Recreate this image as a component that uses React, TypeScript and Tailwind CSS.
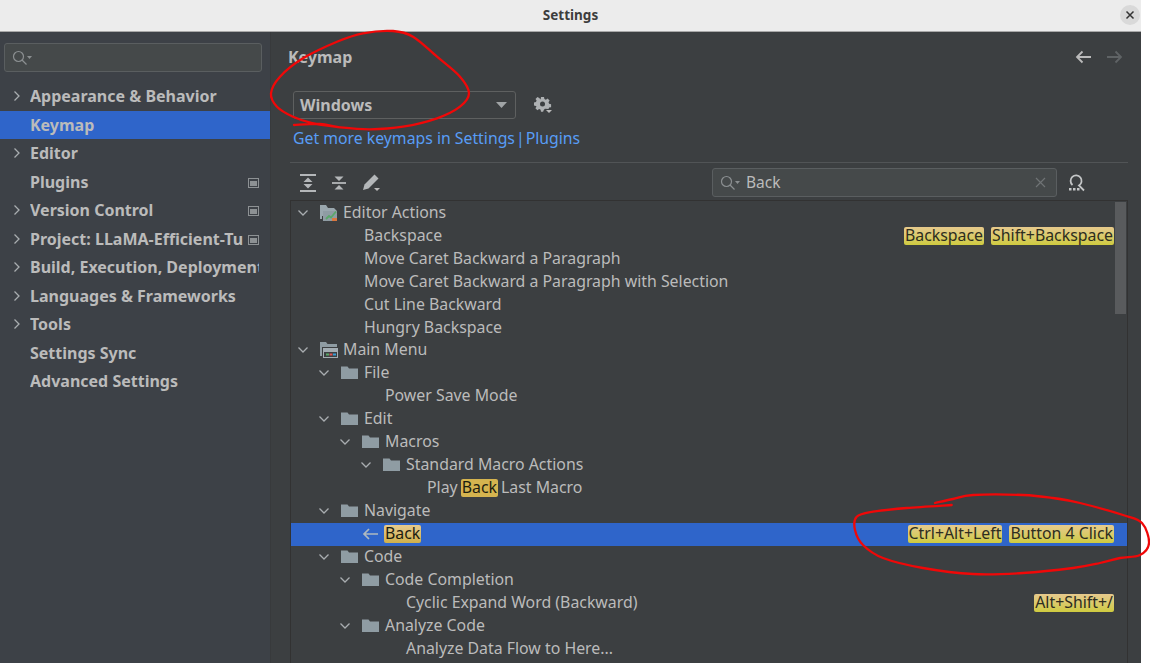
import React from 'react';

const font = { fontFamily: '"Noto Sans", sans-serif' };

const sidebarItems = [
  { label: 'Appearance & Behavior', arrow: true },
  { label: 'Keymap', selected: true },
  { label: 'Editor', arrow: true },
  { label: 'Plugins', badge: true },
  { label: 'Version Control', arrow: true, badge: true },
  { label: 'Project: LLaMA-Efficient-Tuner', arrow: true, badge: true },
  { label: 'Build, Execution, Deployment', arrow: true },
  { label: 'Languages & Frameworks', arrow: true },
  { label: 'Tools', arrow: true },
  { label: 'Settings Sync' },
  { label: 'Advanced Settings' },
];

type TreeRow = {
  depth: number;
  label: string;
  icon?: 'folder' | 'editor' | 'menu' | 'back';
  open?: boolean;
  shortcuts?: string[];
  selected?: boolean;
  match?: boolean;
};

const rows: TreeRow[] = [
  { depth: 0, label: 'Editor Actions', icon: 'editor', open: true },
  { depth: 1, label: 'Backspace', shortcuts: ['Backspace', 'Shift+Backspace'] },
  { depth: 1, label: 'Move Caret Backward a Paragraph' },
  { depth: 1, label: 'Move Caret Backward a Paragraph with Selection' },
  { depth: 1, label: 'Cut Line Backward' },
  { depth: 1, label: 'Hungry Backspace' },
  { depth: 0, label: 'Main Menu', icon: 'menu', open: true },
  { depth: 1, label: 'File', icon: 'folder', open: true },
  { depth: 2, label: 'Power Save Mode' },
  { depth: 1, label: 'Edit', icon: 'folder', open: true },
  { depth: 2, label: 'Macros', icon: 'folder', open: true },
  { depth: 3, label: 'Standard Macro Actions', icon: 'folder', open: true },
  { depth: 4, label: 'Play Back Last Macro', match: true },
  { depth: 1, label: 'Navigate', icon: 'folder', open: true },
  { depth: 2, label: 'Back', icon: 'back', selected: true, shortcuts: ['Ctrl+Alt+Left', 'Button 4 Click'] },
  { depth: 1, label: 'Code', icon: 'folder', open: true },
  { depth: 2, label: 'Code Completion', icon: 'folder', open: true },
  { depth: 3, label: 'Cyclic Expand Word (Backward)', shortcuts: ['Alt+Shift+/'] },
  { depth: 2, label: 'Analyze Code', icon: 'folder', open: true },
  { depth: 3, label: 'Analyze Data Flow to Here...' },
];

function Chevron({ dir }: { dir: 'right' | 'down' }) {
  return (
    <svg width="16" height="16" viewBox="0 0 16 16" fill="none" stroke="#a9adb0" strokeWidth="1.3">
      <path d={dir === 'right' ? 'M5.5 3.5 10 8l-4.500 4.500' : 'M3.500 5.500 8 10l4.500-4.500'} />
    </svg>
  );
}

function RowIcon({ icon }: { icon?: TreeRow['icon'] }) {
  if (icon === 'folder') {
    return (
      <svg width="17" height="16" viewBox="0 0 17 16">
        <path d="M0 1.500h6.500l1.500 2h9V14H0z" fill="#8f9ca3" />
      </svg>
    );
  }
  if (icon === 'back') {
    return (
      <svg width="16" height="16" viewBox="0 0 16 16" fill="none" stroke="#aeb9c0" strokeWidth="1.700">
        <path d="M16 8H2M7 3 2 8l5 5" />
      </svg>
    );
  }
  if (icon === 'menu') {
    return (
      <svg width="18" height="16" viewBox="0 0 18 16">
        <path d="M0 0h6l1.500 2H17v3H2v9H0z" fill="#8f9ca3" />
        <path d="M3 6h15v10H3z" fill="#a3adb3" />
        <path d="M4 10h13v5H4z" fill="#3c3f41" />
        <path d="M6 11.500h3v2H6z" fill="#59a869" />
        <path d="M9.500 11.500h3v2h-3z" fill="#e05555" />
        <path d="M13 11.500h3v2h-3z" fill="#389fd6" />
      </svg>
    );
  }
  if (icon === 'editor') {
    return (
      <svg width="18" height="16" viewBox="0 0 18 16">
        <path d="M0 0h6l2 3h6l3 3-6 5H2v3H0z" fill="#9aa7ae" />
        <path d="M3 6h14v10H3z" fill="#8f9ca3" />
        <path d="m6 14 3-3 2 1.500 5-6" fill="none" stroke="#59a869" strokeWidth="1.800" />
        <path d="M12 13h5v3h-5z" fill="#d9773f" />
      </svg>
    );
  }
  return null;
}

function Shortcut({ text }: { text: string }) {
  return (
    <span className="flex h-[18px] items-center rounded-[2px] bg-linear-to-b from-[#e6c98c] to-[#cfcb3e] px-[1px] text-[#2d2d20]">
      {text}
    </span>
  );
}

// catmull-rom through the traced pen points
function smooth(pts: number[][]) {
  let d = `M${pts[0][0]} ${pts[0][1]}`;
  for (let i = 0; i < pts.length - 1; i++) {
    const p0 = pts[Math.max(i - 1, 0)];
    const p1 = pts[i];
    const p2 = pts[i + 1];
    const p3 = pts[Math.min(i + 2, pts.length - 1)];
    const c1x = p1[0] + (p2[0] - p0[0]) / 6;
    const c1y = p1[1] + (p2[1] - p0[1]) / 6;
    const c2x = p2[0] - (p3[0] - p1[0]) / 6;
    const c2y = p2[1] - (p3[1] - p1[1]) / 6;
    d += ` C${c1x} ${c1y} ${c2x} ${c2y} ${p2[0]} ${p2[1]}`;
  }
  return d;
}

const circleTop = [
  [294, 125], [320, 124], [340, 127.300], [370, 129.300], [403, 126.700], [437, 118.300], [460, 106.700], [469, 93.300],
  [460, 76.700], [437, 56.700], [413, 36.700], [393, 31], [363, 33.300], [337, 41.700], [303, 58.300], [280, 76.700],
  [271, 93.300], [277, 106.700], [293, 116.700], [313, 123.300], [340, 127.300],
];

const circleBottom = [
  [951.700, 505], [906.700, 508], [873, 511.700], [856.700, 516.700], [855, 530], [863, 545], [883, 558], [923, 568],
  [973, 574], [1023, 573], [1073, 568], [1100, 563], [1120, 558], [1140, 555], [1149, 543], [1142, 523], [1123, 515],
  [1080, 503], [1053, 498], [1023, 495], [973, 495], [953, 499], [935, 503],
];

export default function App() {
  return (
    <div className="relative h-[663px] w-[1150px] overflow-hidden bg-white" style={font}>
      <div className="flex h-full w-[1141px] flex-col">
        {/* title bar */}
        <div className="relative flex h-[32px] shrink-0 items-center justify-center border-b border-[#a8a8a8] bg-[#ececec]">
          <span className="text-[13.500px] font-bold text-[#3d3d3d]">Settings</span>
          <div className="absolute right-[1px] top-[5px] flex h-[20px] w-[20px] items-center justify-center rounded-full bg-[#d9d9d9]">
            <svg width="10" height="10" viewBox="0 0 10 10" stroke="#333" strokeWidth="1.500">
              <path d="m1.500 1.500 7 7m0-7-7 7" />
            </svg>
          </div>
        </div>

        <div className="flex min-h-0 flex-1">
          {/* sidebar */}
          <aside className="flex w-[271px] shrink-0 flex-col border-r border-[#383a3c] bg-[#3d4147]">
            <div className="mx-[4px] mt-[11px] flex h-[29px] w-[258px] items-center rounded-[3px] border border-[#5a5e60] bg-[#45494a] pl-[7px]">
              <SearchGlass />
            </div>
            <nav className="mt-[10.200px] flex flex-col">
              {sidebarItems.map((item) => (
                <div
                  key={item.label}
                  className={`relative flex h-[28.500px] items-center text-[16px] font-bold text-[#bbbbbb] ${item.selected ? 'bg-[#2f65ca]' : ''}`}
                >
                  <span className="flex w-[30px] shrink-0 justify-center pl-[3px]">
                    {item.arrow && <Chevron dir="right" />}
                  </span>
                  <span className={`overflow-hidden whitespace-nowrap ${item.badge && item.arrow ? 'w-[213px]' : 'w-[229px]'}`}>
                    {item.label}
                  </span>
                  {item.badge && (
                    <span className="absolute right-[11px] top-[10px] h-[10px] w-[11px] border border-[#8d9194] bg-[#3d4147]">
                      <span className="mx-[1px] mt-[2px] block h-[5px] bg-[#8d9194]" />
                    </span>
                  )}
                </div>
              ))}
            </nav>
          </aside>

          {/* main panel */}
          <main className="flex min-w-0 flex-1 flex-col bg-[#3c3f41] text-[#bbbbbb]">
            <div className="flex h-[50px] shrink-0 items-center justify-between pl-[17px] pr-[18px]">
              <span className="text-[16px] font-bold">Keymap</span>
              <div className="flex items-center gap-[16px]">
                <svg width="16" height="14" viewBox="0 0 16 14" fill="none" stroke="#bbbbbb" strokeWidth="1.800">
                  <path d="M16 7H2M7.500 1.500 2 7l5.500 5.500" />
                </svg>
                <svg width="16" height="14" viewBox="0 0 16 14" fill="none" stroke="#5f6365" strokeWidth="1.800">
                  <path d="M0 7h14M8.500 1.500 14 7l-5.500 5.500" />
                </svg>
              </div>
            </div>

            <div className="mt-[9px] flex items-center pl-[22px]">
              <div className="flex h-[28px] w-[223px] items-center justify-between rounded-[3px] border border-[#5e6060] bg-[#3c3f41] pl-[6px] pr-[8px] text-[16px] font-bold">
                <span>Windows</span>
                <svg width="11" height="6" viewBox="0 0 11 6"><path d="M0 0h11L5.500 6z" fill="#a0a4a6" /></svg>
              </div>
              <svg className="ml-[18px]" width="18" height="18" viewBox="0 0 18 18">
                <path
                  d="M7 1h3l.4 2 1.500.7 1.700-1.100 2 2-1.100 1.700.6 1.500 2 .4v3l-2 .4-.6 1.300-3.600-.1-1.100 1.200-.7 1.700H7l-.4-2-1.500-.6-1.700 1.100-2-2 1.100-1.700L1.900 9.900 0 9.500v-3l2-.4.600-1.500L1.500 2.900l2-2 1.700 1.100L6.600 3.400z"
                  fill="#aeb1b3"
                />
                <circle cx="8.500" cy="8" r="2.500" fill="#3c3f41" />
                <path d="M12 14h6l-3 3z" fill="#bbbbbb" />
              </svg>
            </div>

            <div className="mt-[7px] flex pl-[22px] text-[15.800px] leading-[24px] text-[#589df6]">
              <span>Get more keymaps in Settings</span>
              <span className="mx-[1px]">|</span>
              <span>Plugins</span>
            </div>

            <div className="ml-[19px] mr-[13px] mt-[12px] border-t border-[#515456]" />

            {/* toolbar */}
            <div className="flex h-[37px] shrink-0 items-center pl-[29px] pr-[55px] pt-[2px]">
              <div className="flex items-center gap-[15px]">
                <svg width="16" height="18" viewBox="0 0 16 18" stroke="#b4b7b9" strokeWidth="2" fill="#b4b7b9">
                  <path d="M0 1h16M0 17h16" fill="none" />
                  <path d="M8 3.500 3.500 8h9zM8 14.500l4.500-4.500h-9z" stroke="none" />
                </svg>
                <svg width="16" height="18" viewBox="0 0 16 18" stroke="#b4b7b9" strokeWidth="1.800" fill="#b4b7b9">
                  <path d="M1 9h14" fill="none" />
                  <path d="M8 7 3.500 2.500h9zM8 11l4.500 4.500h-9z" stroke="none" />
                </svg>
                <svg width="18" height="18" viewBox="0 0 18 18" fill="#b4b7b9">
                  <path d="M12.500 0.500 16.500 4.500 6.500 14.500 1 16l1.500-5.500z" />
                  <path d="M12 14h6l-3 3z" fill="#bbbbbb" />
                </svg>
              </div>
              <div className="ml-auto flex items-center">
                <div className="flex h-[29px] w-[345px] items-center rounded-[3px] border border-[#5a5e60] bg-[#45494a] pl-[7px] pr-[10px] text-[15.500px]">
                  <SearchGlass />
                  <span className="ml-[4px]">Back</span>
                  <svg className="ml-auto" width="11" height="11" viewBox="0 0 11 11" stroke="#6f7375" strokeWidth="1.200">
                    <path d="m1 1 9 9m0-9-9 9" />
                  </svg>
                </div>
                <svg className="ml-[11px]" width="18" height="18" viewBox="0 0 18 18" fill="none" stroke="#c4c6c7" strokeWidth="1.800">
                  <path d="M4.500 11A5.500 5.500 0 1 1 11 11.500l5 5" />
                  <path d="M1 14h2.500v2.500H1zM5 14h2.500v2.500H5zM9 14h2.500v2.500H9z" fill="#c4c6c7" stroke="none" />
                </svg>
              </div>
            </div>

            {/* action tree */}
            <div className="relative ml-[19px] mr-[13px] min-h-0 flex-1 overflow-hidden border-l border-t border-r border-[#323232] pt-[0.100px]">
              <div className="absolute right-[1px] top-[1px] h-[112px] w-[11px] bg-[#595b5d]" />
              {rows.map((row) => (
                <div
                  key={row.label}
                  className={`flex h-[22.970px] items-center whitespace-nowrap pl-[4px] pr-[13px] text-[15.870px] ${row.selected ? 'bg-[#2f65ca]' : ''}`}
                >
                  <span className="shrink-0" style={{ width: row.depth * 21 }} />
                  <span className="w-[16px] shrink-0">{row.open && <Chevron dir="down" />}</span>
                  <span className="ml-[9px] w-[16px] shrink-0">
                    <RowIcon icon={row.icon} />
                  </span>
                  <span className="ml-[7px]">
                    {row.match ? (
                      <span className="flex items-center gap-[3px]">
                        Play
                        <span className="flex h-[18px] items-center rounded-[2px] bg-[#d5b44f] px-[1px] text-[#1d1d10]">Back</span>
                        Last Macro
                      </span>
                    ) : row.selected ? (
                      <span className="-ml-[1px] flex h-[18px] items-center rounded-[2px] bg-linear-to-b from-[#e6c98c] to-[#cfb04a] px-[1px] text-[#1d1d10]">
                        {row.label}
                      </span>
                    ) : (
                      row.label
                    )}
                  </span>
                  {row.shortcuts && (
                    <span className="ml-auto flex items-center gap-[7px]">
                      {row.shortcuts.map((s) => (
                        <Shortcut key={s} text={s} />
                      ))}
                    </span>
                  )}
                </div>
              ))}
            </div>
          </main>
        </div>
      </div>

      {/* red pen annotations */}
      <svg className="pointer-events-none absolute left-0 top-0" width="1150" height="663" fill="none" stroke="#f00808" strokeWidth="2.300" strokeLinecap="round">
        <path d={smooth(circleTop)} />
        <path d={smooth(circleBottom)} />
      </svg>
    </div>
  );
}

function SearchGlass() {
  return (
    <svg width="22" height="16" viewBox="0 0 22 16" fill="none" stroke="#8b8f91" strokeWidth="1.200" className="shrink-0">
      <circle cx="6.500" cy="6.500" r="5" />
      <path d="m10 10 4.500 4.500" />
      <path d="M15 6h5l-2.500 3z" fill="#8b8f91" stroke="none" />
    </svg>
  );
}
